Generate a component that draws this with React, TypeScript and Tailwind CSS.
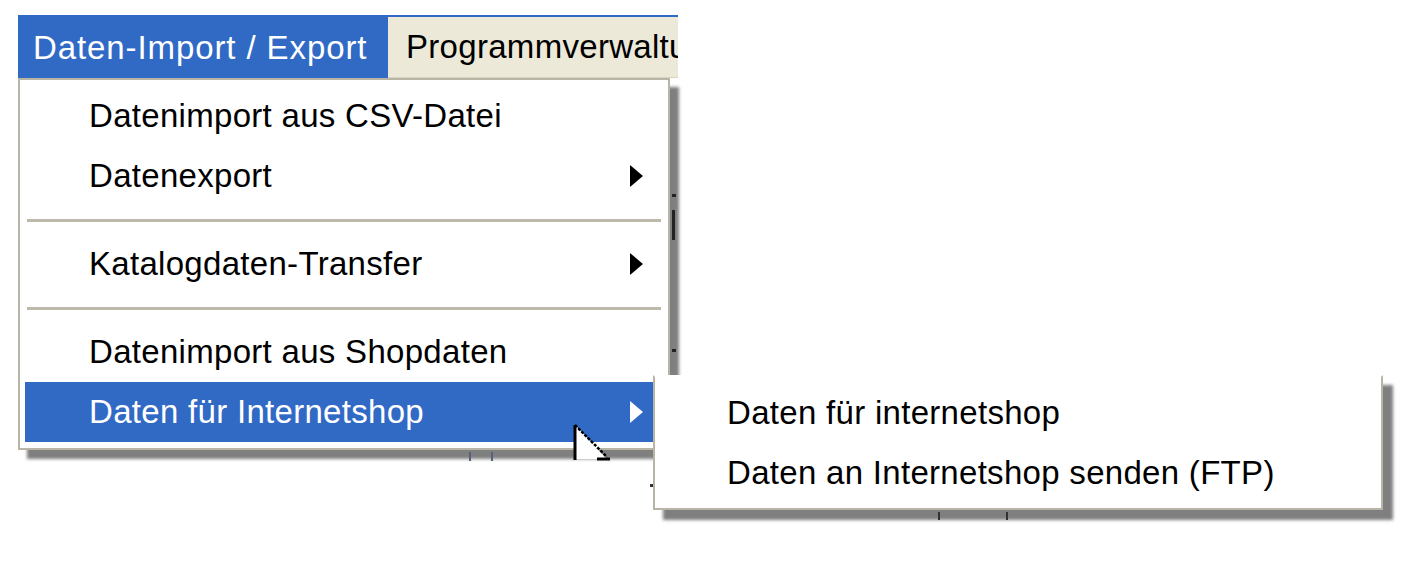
import React from "react";

type Row = { kind: "item"; label: string; sub?: boolean; active?: boolean } | { kind: "sep" };

const rows: Row[] = [
  { kind: "item", label: "Datenimport aus CSV-Datei" },
  { kind: "item", label: "Datenexport", sub: true },
  { kind: "sep" },
  { kind: "item", label: "Katalogdaten-Transfer", sub: true },
  { kind: "sep" },
  { kind: "item", label: "Datenimport aus Shopdaten" },
  { kind: "item", label: "Daten für Internetshop", sub: true, active: true },
];

const subItems = ["Daten für internetshop", "Daten an Internetshop senden (FTP)"];

function Arrow({ white }: { white?: boolean }) {
  return (
    <svg width="13" height="22" viewBox="0 0 13 22" className="shrink-0">
      <polygon points="0,0 13,11 0,22" fill={white ? "#ffffff" : "#000000"} />
    </svg>
  );
}

function Cursor() {
  return (
    <svg width="40" height="40" viewBox="0 0 40 40" className="absolute left-[573px] top-[423px]">
      <polygon points="2,2 2,36 34,36" fill="#ffffff" />
      <path d="M2 2 L2 37" stroke="#000" strokeWidth="3" />
      <path d="M2 2 L34 34" stroke="#000" strokeWidth="2.5" strokeDasharray="3 1.5" />
      <path d="M24 36 L37 36" stroke="#000" strokeWidth="3" />
    </svg>
  );
}

export default function App() {
  return (
    <div className="relative w-[1424px] h-[572px] overflow-hidden bg-white font-['Liberation_Sans',Arial,sans-serif] text-[33px] tracking-[0.3px] text-black">
      <div className="pl-[18px] pt-[15px]">
        {/* menu bar */}
        <div className="flex w-[660px] h-[63px] border-t-2 border-[#316ac5] overflow-hidden whitespace-nowrap">
          <div className="w-[370px] shrink-0 bg-[#316ac5] text-white pl-[15px] flex items-center tracking-[0.9px]">
            Daten-Import / Export
          </div>
          <div className="flex-1 bg-[#ece9d8] pl-[18px] flex items-center border-b border-[#d8d4c4]">
            Programmverwaltung
          </div>
        </div>

        {/* main dropdown */}
        <div className="w-[652px] h-[372px] bg-white border-2 border-[#b8b5a7] pt-[6px] px-[5px] shadow-[9px_9px_3px_rgba(0,0,0,0.5)]">
          {rows.map((r, i) =>
            r.kind === "sep" ? (
              <div key={i} className="h-[28px] flex items-center px-[2px]">
                <div className="h-[3px] w-full bg-[#bdbaab]" />
              </div>
            ) : (
              <div
                key={i}
                className={`h-[60px] flex items-center justify-between pl-[64px] pr-[20px] ${
                  r.active ? "bg-[#316ac5] text-white" : ""
                }`}
              >
                <span>{r.label}</span>
                {r.sub && <Arrow white={r.active} />}
              </div>
            )
          )}
        </div>
      </div>

      {/* stray marks of the window underneath */}
      <div className="absolute left-[672px] top-[194px] w-[4px] h-[3px] bg-[#222]" />
      <div className="absolute left-[672px] top-[210px] w-[3px] h-[30px] bg-[#222]" />
      <div className="absolute left-[672px] top-[349px] w-[4px] h-[3px] bg-[#222]" />
      <div className="absolute left-[469px] top-[452px] w-[2px] h-[9px] bg-[#56607a]" />
      <div className="absolute left-[491px] top-[452px] w-[2px] h-[9px] bg-[#56607a]" />
      <div className="absolute left-[650px] top-[484px] w-[3px] h-[3px] bg-[#333]" />

      {/* submenu */}
      <div className="absolute left-[653px] top-[375px] w-[730px] h-[135px] bg-white border-2 border-[#b8b5a7] border-t-white pt-[6px] shadow-[10px_10px_3px_rgba(0,0,0,0.5)]">
        {subItems.map((s) => (
          <div key={s} className="h-[60px] flex items-center pl-[72px] whitespace-nowrap">
            {s}
          </div>
        ))}
      </div>
      <div className="absolute left-[938px] top-[512px] w-[2px] h-[8px] bg-[#333]" />
      <div className="absolute left-[1006px] top-[512px] w-[2px] h-[8px] bg-[#333]" />

      <Cursor />
    </div>
  );
}
